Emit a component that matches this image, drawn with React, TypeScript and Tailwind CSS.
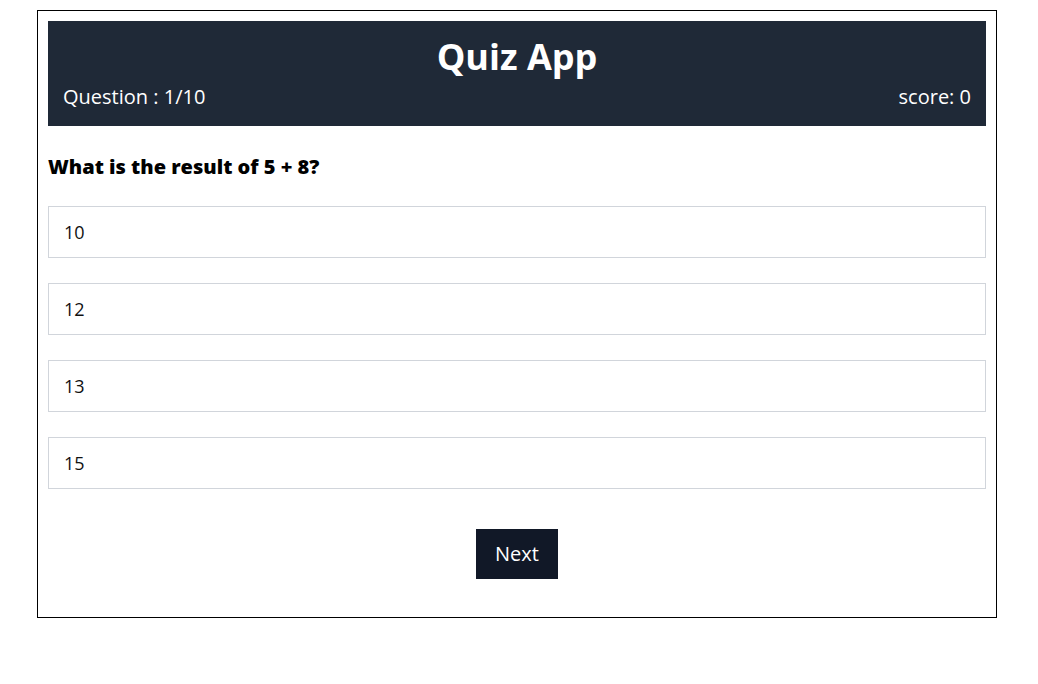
import React, { useState } from 'react';

const options = ['10', '12', '13', '15'];

export default function App() {
  const [selected, setSelected] = useState<number | null>(null);

  return (
    <div className="min-h-screen bg-white pt-[10px] font-['Open_Sans','Noto_Sans',sans-serif]">
      <div className="ml-[37px] w-[960px] border border-black p-[10px]">
        <header className="bg-[#1f2937] text-white pt-[16px] pb-[15px] px-[15px]">
          <h1 className="text-center text-4xl font-bold leading-[40px] mb-[6px]">Quiz App</h1>
          <div className="flex justify-between text-xl leading-7">
            <span>Question : 1/10</span>
            <span>score: 0</span>
          </div>
        </header>

        <h2 className="mt-[27px] text-xl font-extrabold leading-7 text-black">What is the result of 5 + 8?</h2>

        <div className="mt-[25px] flex flex-col gap-[25px]">
          {options.map((opt, i) => (
            <button
              key={opt}
              onClick={() => setSelected(i)}
              className={`text-left border border-[#d1d5db] px-[15px] py-[11px] text-lg leading-7 text-[#111] ${
                selected === i ? 'bg-gray-100' : 'bg-white'
              }`}
            >
              {opt}
            </button>
          ))}
        </div>

        <div className="mt-[40px] mb-[28px] flex justify-center">
          <button className="bg-[#111827] text-white text-xl leading-7 px-[19px] py-[11px]">Next</button>
        </div>
      </div>
    </div>
  );
}
